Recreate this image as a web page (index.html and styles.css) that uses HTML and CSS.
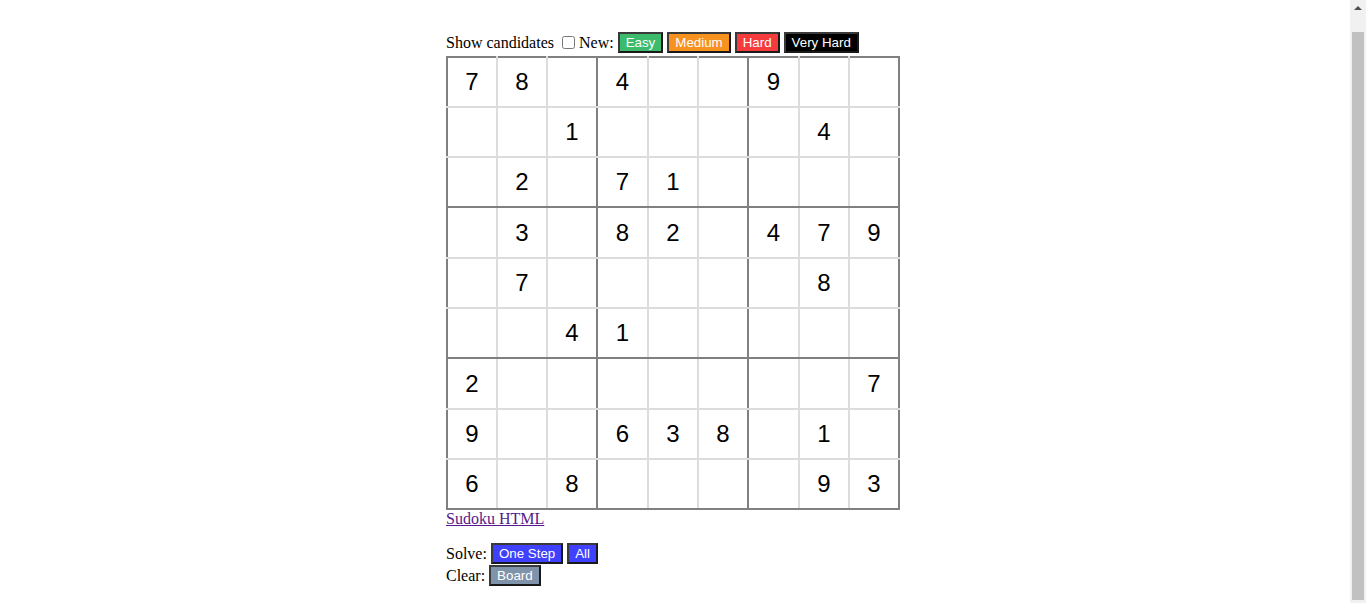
FILE: index.html
```html
<!DOCTYPE html>
<html>
<head>
<meta charset="utf-8">
<title>Sudoku</title>
<link rel="stylesheet" href="styles.css">
</head>
<body>
<div class="page">
  <div class="controls">Show candidates <input type="checkbox" class="cand"> New: <span class="btn easy">Easy</span> <span class="btn medium">Medium</span> <span class="btn hard">Hard</span> <span class="btn vhard">Very Hard</span></div>
  <table class="board">
    <tr><td>7</td><td>8</td><td></td><td>4</td><td></td><td></td><td>9</td><td></td><td></td></tr>
    <tr><td></td><td></td><td>1</td><td></td><td></td><td></td><td></td><td>4</td><td></td></tr>
    <tr><td></td><td>2</td><td></td><td>7</td><td>1</td><td></td><td></td><td></td><td></td></tr>
    <tr><td></td><td>3</td><td></td><td>8</td><td>2</td><td></td><td>4</td><td>7</td><td>9</td></tr>
    <tr><td></td><td>7</td><td></td><td></td><td></td><td></td><td></td><td>8</td><td></td></tr>
    <tr><td></td><td></td><td>4</td><td>1</td><td></td><td></td><td></td><td></td><td></td></tr>
    <tr><td>2</td><td></td><td></td><td></td><td></td><td></td><td></td><td></td><td>7</td></tr>
    <tr><td>9</td><td></td><td></td><td>6</td><td>3</td><td>8</td><td></td><td>1</td><td></td></tr>
    <tr><td>6</td><td></td><td>8</td><td></td><td></td><td></td><td></td><td>9</td><td>3</td></tr>
  </table>
  <p class="link"><a href="#">Sudoku HTML</a></p>
  <div class="row">Solve: <span class="btn blue">One Step</span> <span class="btn blue">All</span></div>
  <div class="row">Clear: <span class="btn gray">Board</span></div>
</div>
<div class="scrollbar"><div class="arrow"></div><div class="thumb"></div></div>
</body>
</html>
```
FILE: styles.css
```css
html, body {
  margin: 0;
  padding: 0;
  background: #fff;
}
body {
  font-family: "Liberation Serif", "Times New Roman", serif;
  font-size: 16px;
  color: #000;
  margin-right: 16px;
}
.page {
  width: 458px;
  margin: 0 auto;
  padding: 31px 0 30px;
}
.controls {
  line-height: 24px;
  height: 25px;
}
.cand {
  margin: 3px 0 3px 4px;
  width: 13px;
  height: 13px;
  vertical-align: -1px;
}
.btn {
  display: inline-block;
  font-family: "Liberation Sans", Arial, sans-serif;
  font-size: 13.333px;
  line-height: 15px;
  color: #fff;
  padding: 1px 6px;
  border: 2px solid #3a3a3a;
  border-right-color: #1a1a1a;
  border-bottom-color: #1a1a1a;
  vertical-align: 1px;
}
.easy { background: #3cbb6d; }
.medium { background: #f8921f; }
.hard { background: #f53b3b; }
.vhard { background: #000; }
.blue { background: #4040ff; }
.gray { background: #7f93ab; }
.board {
  border-collapse: collapse;
  margin: 0;
}
.board td {
  width: 48px;
  height: 48px;
  padding: 0;
  border: 2px solid #dcdcdc;
  text-align: center;
  vertical-align: middle;
  font-family: "Liberation Sans", Arial, sans-serif;
  font-size: 24px;
}
.board td:nth-child(4),
.board td:nth-child(7) { width: 49px; }
.board tr:nth-child(4) td,
.board tr:nth-child(7) td { height: 49px; }
.board td:first-child { border-left-color: #808080; }
.board td:nth-child(3n) { border-right-color: #808080; }
.board tr:first-child td { border-top-color: #808080; }
.board tr:nth-child(3n) td { border-bottom-color: #808080; }
.link {
  margin: 0 0 15px;
  line-height: 18px;
}
.link a { color: #551a8b; }
.row {
  line-height: 22px;
}
.scrollbar {
  position: fixed;
  top: 0;
  right: 0;
  width: 16px;
  height: 100%;
  background: #f1f1f1;
}
.arrow {
  position: absolute;
  top: 6px;
  left: 4px;
  width: 0;
  height: 0;
  border-left: 4px solid transparent;
  border-right: 4px solid transparent;
  border-bottom: 4px solid #505050;
}
.thumb {
  position: absolute;
  top: 32px;
  bottom: 3px;
  left: 2px;
  width: 12px;
  background: #c1c1c1;
}
```
